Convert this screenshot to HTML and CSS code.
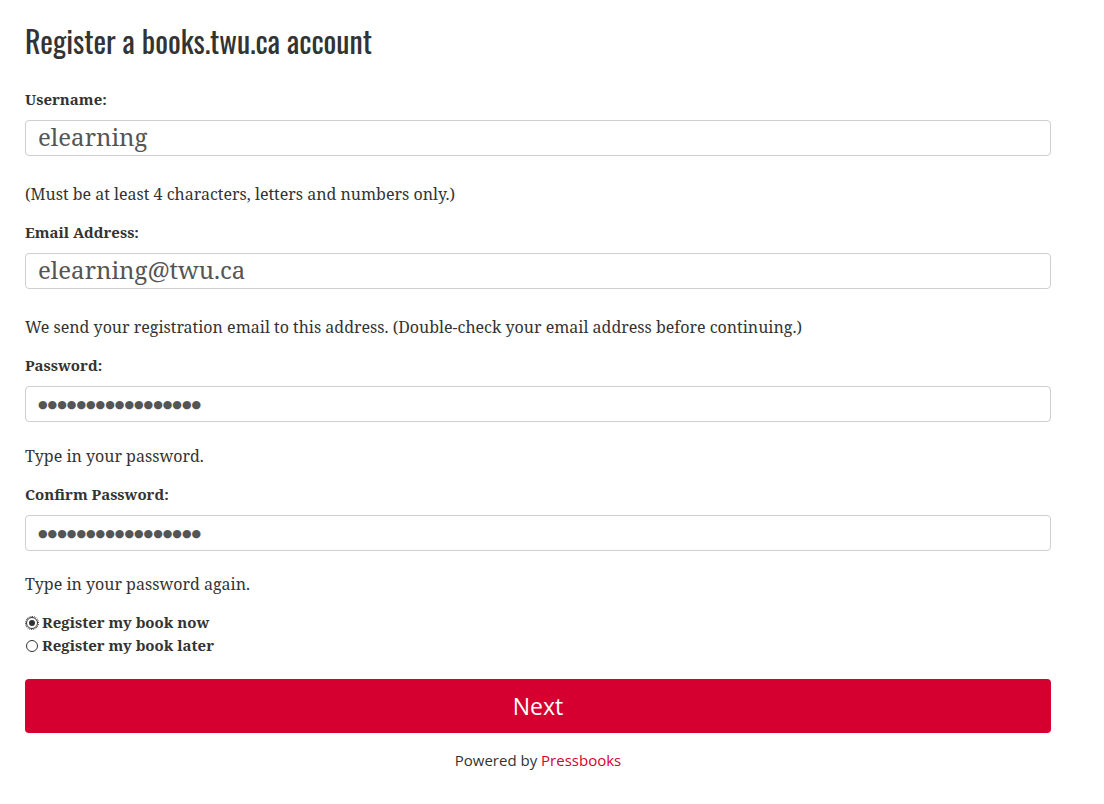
FILE: index.html
```html
<!DOCTYPE html>
<html lang="en">
<head>
<meta charset="utf-8">
<title>Register a books.twu.ca account</title>
<link rel="stylesheet" href="styles.css">
</head>
<body>
<div class="page">
  <h1 class="title">Register a books.twu.ca account</h1>
  <form class="form">
    <label class="label" for="user">Username:</label>
    <input class="field" id="user" type="text" value="elearning">
    <p class="help">(Must be at least 4 characters, letters and numbers only.)</p>

    <label class="label" for="email">Email Address:</label>
    <input class="field" id="email" type="text" value="elearning@twu.ca">
    <p class="help">We send your registration email to this address. (Double-check your email address before continuing.)</p>

    <label class="label" for="pass1">Password:</label>
    <input class="field pw" id="pass1" type="text" value="●●●●●●●●●●●●●●●●●">
    <p class="help help-short">Type in your password.</p>

    <label class="label" for="pass2">Confirm Password:</label>
    <input class="field pw" id="pass2" type="text" value="●●●●●●●●●●●●●●●●●">
    <p class="help help-short help-last">Type in your password again.</p>

    <div class="radios">
      <label class="radio"><input class="radio-input" type="radio" name="when" checked>Register my book now</label>
      <label class="radio"><input class="radio-input" type="radio" name="when">Register my book later</label>
    </div>

    <button class="next" type="button">Next</button>
  </form>
  <p class="powered">Powered by <a href="#">Pressbooks</a></p>
</div>
</body>
</html>
```
FILE: styles.css
```css
html, body {
  margin: 0;
  padding: 0;
  background: #fff;
}
body {
  font-family: "Noto Serif", "DejaVu Serif", serif;
  color: #333;
}
.page {
  width: 1026px;
  padding: 0 25px;
}
.title {
  font-family: "Oswald", "DejaVu Sans Condensed", sans-serif;
  font-weight: normal;
  font-size: 30px;
  line-height: 44px;
  margin: 19px 0 26px;
  color: #333;
}
.form {
  display: flex;
  flex-direction: column;
}
.label {
  display: block;
  font-weight: bold;
  font-size: 15px;
  line-height: 20px;
  margin-bottom: 11px;
}
.field {
  box-sizing: border-box;
  height: 36px;
  width: 100%;
  border: 1px solid #cfcfcf;
  border-radius: 4px;
  padding: 0 12px 3px;
  font-family: "Noto Serif", "DejaVu Serif", serif;
  font-size: 24px;
  color: #555;
  margin: 0;
}
.pw {
  font-size: 11px;
  padding-bottom: 1px;
}
.help {
  font-size: 16px;
  line-height: 20px;
  margin: 28px 0 18px;
}
.help-short {
  margin-top: 24px;
}
.help-last {
  margin-top: 23px;
  margin-bottom: 17px;
}
.radios {
  display: flex;
  flex-direction: column;
}
.radio {
  font-weight: bold;
  font-size: 15px;
  line-height: 23px;
  display: flex;
  align-items: center;
  gap: 4px;
}
.radio-input {
  appearance: none;
  -webkit-appearance: none;
  box-sizing: border-box;
  margin: 0 0 0 1px;
  width: 12px;
  height: 12px;
  border: 1px solid #333;
  border-radius: 50%;
  background: #fff;
  position: relative;
}
.radio-input:checked::after {
  content: "";
  position: absolute;
  left: 2px;
  top: 2px;
  width: 6px;
  height: 6px;
  border-radius: 50%;
  background: #333;
}
.radio-input:checked {
  outline: 1px dotted #333;
  outline-offset: 0;
}
.next {
  margin-top: 22px;
  height: 54px;
  width: 100%;
  border: none;
  border-radius: 4px;
  background: #d5002f;
  color: #fff;
  font-family: "Open Sans", sans-serif;
  font-size: 23px;
}
.powered {
  text-align: center;
  font-family: "Open Sans", sans-serif;
  font-size: 15px;
  line-height: 20px;
  margin: 17px 0 0;
  color: #333;
}
.powered a {
  color: #d5002f;
  text-decoration: none;
}
```
